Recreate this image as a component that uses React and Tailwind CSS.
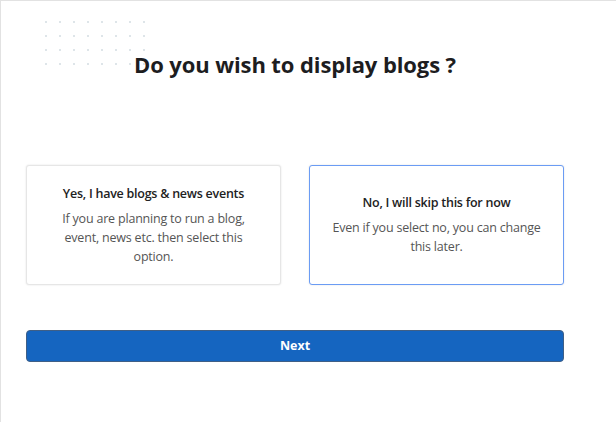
import React, { useState } from "react";

const options = [
  {
    id: "yes",
    title: "Yes, I have blogs & news events",
    text: "If you are planning to run a blog, event, news etc. then select this option.",
    textWidth: "max-w-[196px]",
  },
  {
    id: "no",
    title: "No, I will skip this for now",
    text: "Even if you select no, you can change this later.",
    textWidth: "max-w-[222px]",
  },
];

const Dots = () => (
  <div className="absolute left-[44px] top-[20px] grid grid-cols-8 gap-x-[12px] gap-y-[12px]">
    {Array.from({ length: 32 }).map((_, i) => (
      <span key={i} className="block w-[2px] h-[2px] rounded-full bg-[#d3dde2]" />
    ))}
  </div>
);

export default function App() {
  const [selected, setSelected] = useState("no");

  return (
    <div
      className="relative w-[616px] h-[422px] bg-white border-t border-l border-[#e2e2e2] overflow-hidden"
      style={{ fontFamily: '"Open Sans", "Noto Sans", sans-serif' }}
    >
      <Dots />
      <div className="pl-[25px] w-[563px]">
        <h1 className="pt-[47px] text-center text-[22px] font-bold text-[#1d1d1f] leading-[32px] tracking-[-0.1px]">
          Do you wish to display blogs ?
        </h1>

        <div className="mt-[85px] grid grid-cols-2 gap-[28px]">
          {options.map((o) => (
            <button
              key={o.id}
              onClick={() => setSelected(o.id)}
              className={
                "h-[120px] flex flex-col items-center justify-center px-[14px] rounded-[3px] bg-white text-center shadow-[0_0_2px_rgba(0,0,0,0.12)] " +
                (selected === o.id
                  ? "border border-[#6b9cf4]"
                  : "border border-[#e6e6e6]")
              }
            >
              <div className="text-[12.5px] font-semibold text-[#222] leading-[18px] tracking-[-0.25px]">
                {o.title}
              </div>
              <div
                className={
                  "mt-[6px] text-[12.5px] text-[#555] leading-[19px] tracking-[-0.2px] " +
                  o.textWidth
                }
              >
                {o.text}
              </div>
            </button>
          ))}
        </div>

        <button className="mt-[45px] w-full h-[32px] rounded-[4px] bg-[#1565c0] border border-[#3f5f86] text-white text-[12.5px] font-bold">
          Next
        </button>
      </div>
    </div>
  );
}
